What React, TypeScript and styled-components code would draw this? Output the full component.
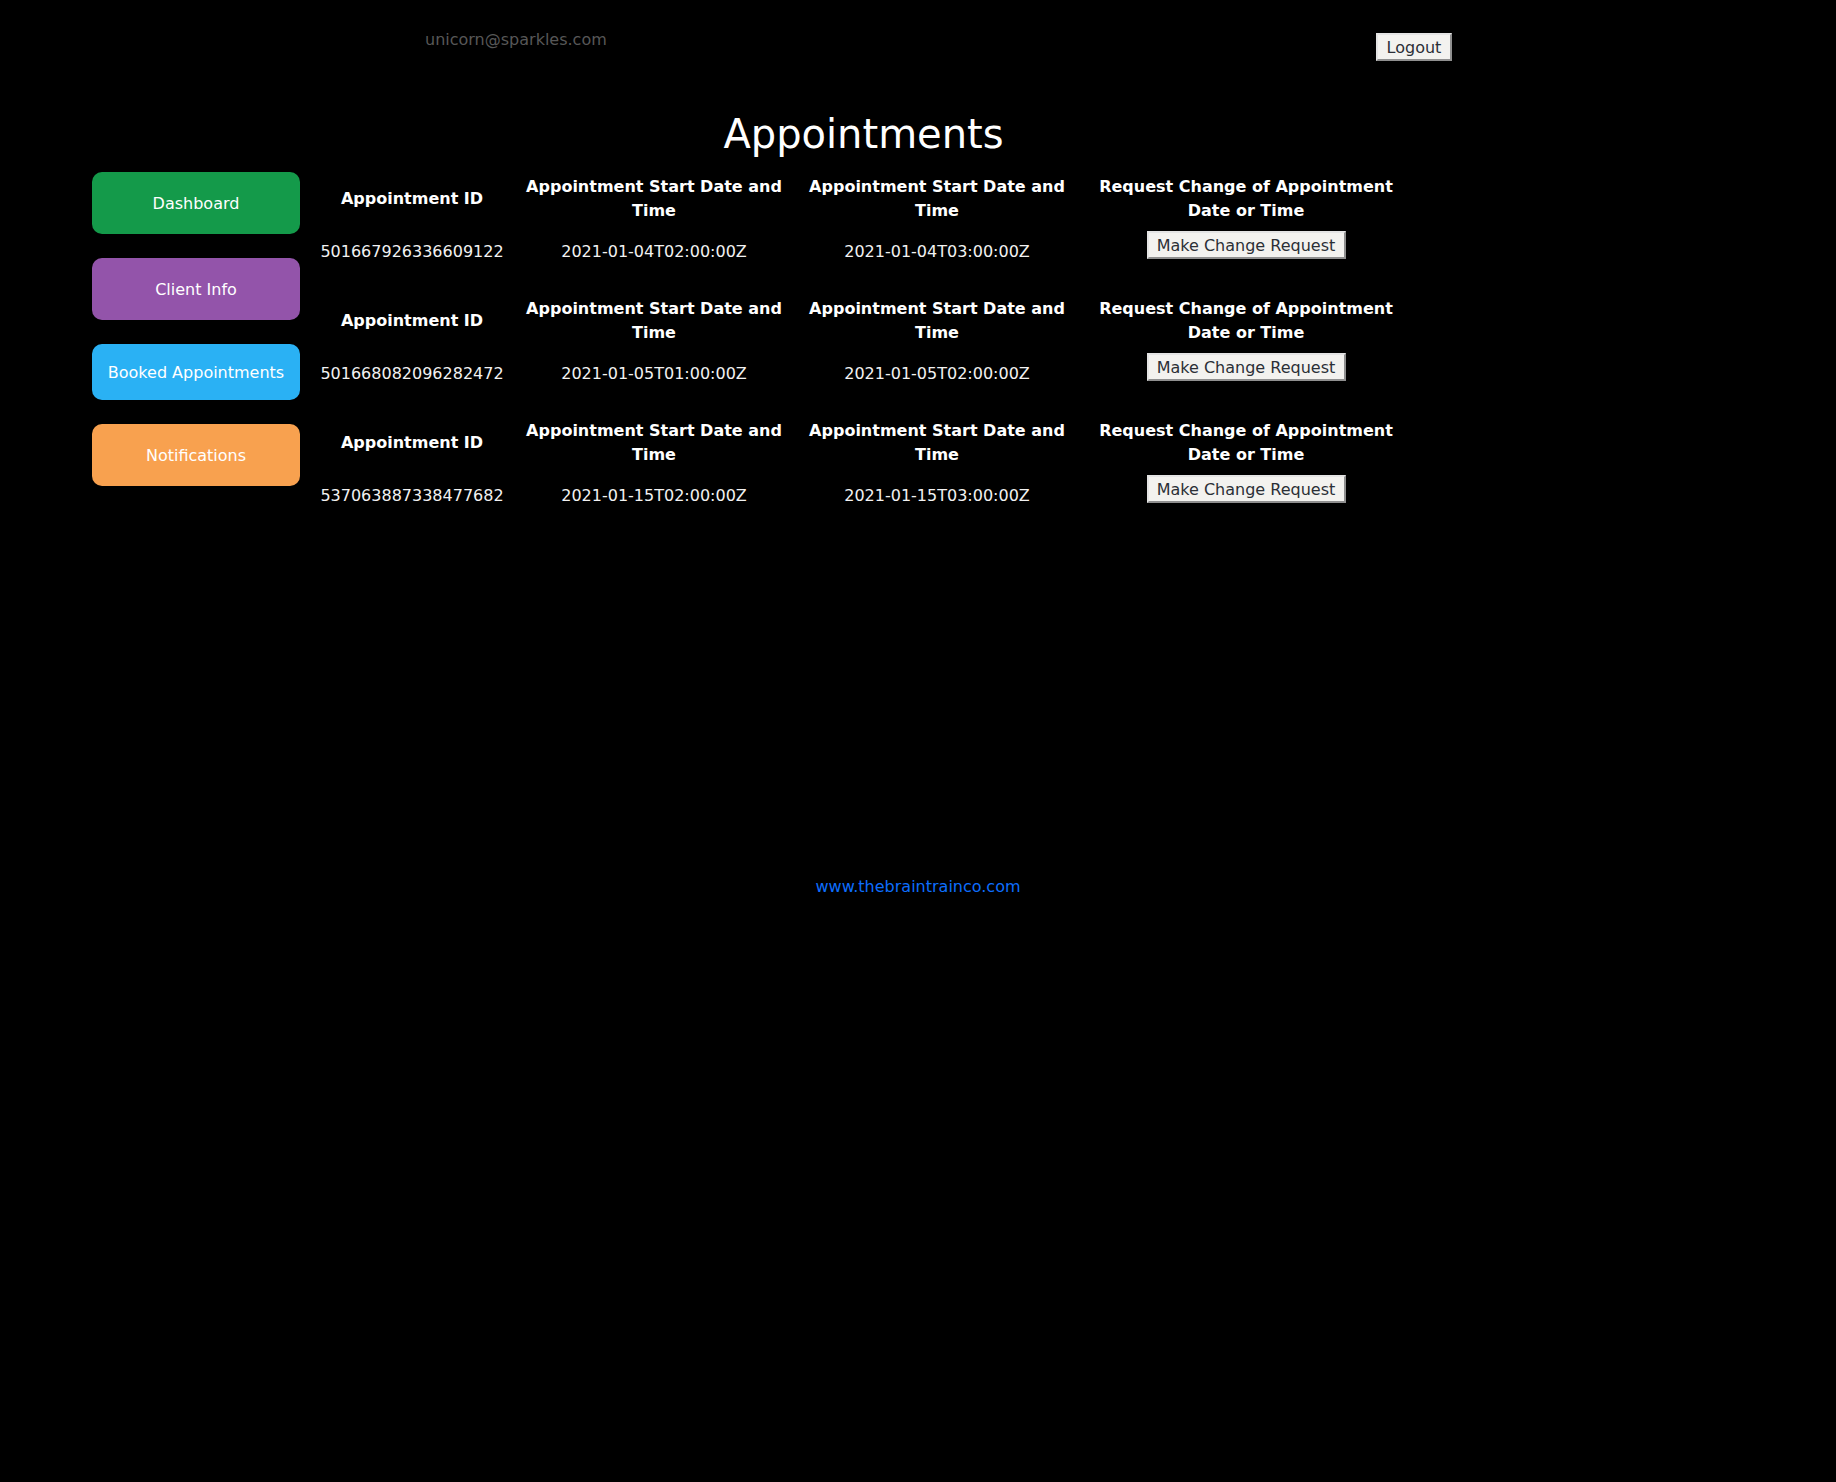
import React from "react";
import { createGlobalStyle, styled } from "styled-components";

const GlobalStyle = createGlobalStyle`
  body {
    margin: 0;
    background-color: #000;
    color: #fff;
    font-family: "DejaVu Sans", "Noto Sans", sans-serif;
    font-size: 16px;
  }
`;

type Appointment = { id: string; start: string; end: string };

const appointments: Appointment[] = [
  { id: "501667926336609122", start: "2021-01-04T02:00:00Z", end: "2021-01-04T03:00:00Z" },
  { id: "501668082096282472", start: "2021-01-05T01:00:00Z", end: "2021-01-05T02:00:00Z" },
  { id: "537063887338477682", start: "2021-01-15T02:00:00Z", end: "2021-01-15T03:00:00Z" },
];

const navItems = [
  { label: "Dashboard", color: "#149a4a", height: 62 },
  { label: "Client Info", color: "#9354aa", height: 62 },
  { label: "Booked Appointments", color: "#2ab1f4", height: 56 },
  { label: "Notifications", color: "#f8a14f", height: 62 },
];

const App = () => {
  return (
    <Page>
      <GlobalStyle />
      <Header>
        <Email>unicorn@sparkles.com</Email>
        <LogoutButton>Logout</LogoutButton>
      </Header>
      <Main>
        <Title>Appointments</Title>
        <Sidebar>
          {navItems.map((item) => (
            <NavButton key={item.label} $color={item.color} $height={item.height}>
              {item.label}
            </NavButton>
          ))}
        </Sidebar>
        <Tables>
          {appointments.map((a) => (
            <AppointmentTable key={a.id}>
              <HeadCell>Appointment ID</HeadCell>
              <HeadCell>Appointment Start Date and Time</HeadCell>
              <HeadCell>Appointment Start Date and Time</HeadCell>
              <HeadCell>Request Change of Appointment Date or Time</HeadCell>
              <DataCell>{a.id}</DataCell>
              <DataCell>{a.start}</DataCell>
              <DataCell>{a.end}</DataCell>
              <ButtonCell>
                <ChangeButton>Make Change Request</ChangeButton>
              </ButtonCell>
            </AppointmentTable>
          ))}
        </Tables>
      </Main>
      <Footer>
        <FooterLink href="#">www.thebraintrainco.com</FooterLink>
      </Footer>
    </Page>
  );
};

const Page = styled.div`
  width: 100%;
  min-height: 1482px;
`;

const Header = styled.div`
  display: flex;
  justify-content: space-between;
  align-items: flex-start;
  height: 61px;
  padding: 0 384px 0 425px;
`;

const Email = styled.div`
  margin-top: 30px;
  line-height: 19px;
  color: #575757;
`;

const BaseButton = styled.button`
  height: 28px;
  padding: 0 8px;
  font-family: "DejaVu Sans", sans-serif;
  font-size: 16px;
  color: #2b2f36;
  background-color: #f3f2ef;
  border: 2px solid;
  border-color: #e4e4e4 #8f8f8f #8f8f8f #e4e4e4;
  box-sizing: border-box;
  cursor: pointer;
`;

const LogoutButton = styled(BaseButton)`
  margin-top: 33px;
  width: 76px;
`;

const ChangeButton = styled(BaseButton)`
  width: 199px;
`;

const Main = styled.div`
  display: grid;
  grid-template-columns: 208px 1105px;
  column-gap: 11px;
  row-gap: 14px;
  margin: 49px 0 0 92px;
`;

const Title = styled.h1`
  grid-column: 2;
  margin: 0;
  font-size: 40px;
  font-weight: normal;
  line-height: 48px;
  text-align: center;
  color: #fff;
`;

const Sidebar = styled.nav`
  grid-column: 1;
  display: flex;
  flex-direction: column;
  gap: 24px;
`;

const NavButton = styled.div<{ $color: string; $height: number }>`
  display: flex;
  align-items: center;
  justify-content: center;
  height: ${(p) => p.$height}px;
  border-radius: 10px;
  background-color: ${(p) => p.$color};
  color: #fff;
  cursor: pointer;
`;

const Tables = styled.div`
  grid-column: 2;
  padding-top: 3px;
`;

const AppointmentTable = styled.div`
  display: grid;
  grid-template-columns: 202px 278px 284px 330px;
  grid-template-rows: 48px 74px;
  column-gap: 2px;
`;

const HeadCell = styled.div`
  display: flex;
  align-items: center;
  justify-content: center;
  text-align: center;
  font-weight: bold;
  line-height: 24px;
  color: #fff;
`;

const DataCell = styled.div`
  padding-top: 17px;
  line-height: 24px;
  text-align: center;
  color: #f2f2f2;
`;

const ButtonCell = styled.div`
  display: flex;
  justify-content: center;
  align-items: flex-start;
  padding-top: 8px;
`;

const Footer = styled.div`
  margin-top: 336px;
  text-align: center;
  line-height: 19px;
`;

const FooterLink = styled.a`
  color: #0d6efd;
  text-decoration: none;
`;

export default App;
